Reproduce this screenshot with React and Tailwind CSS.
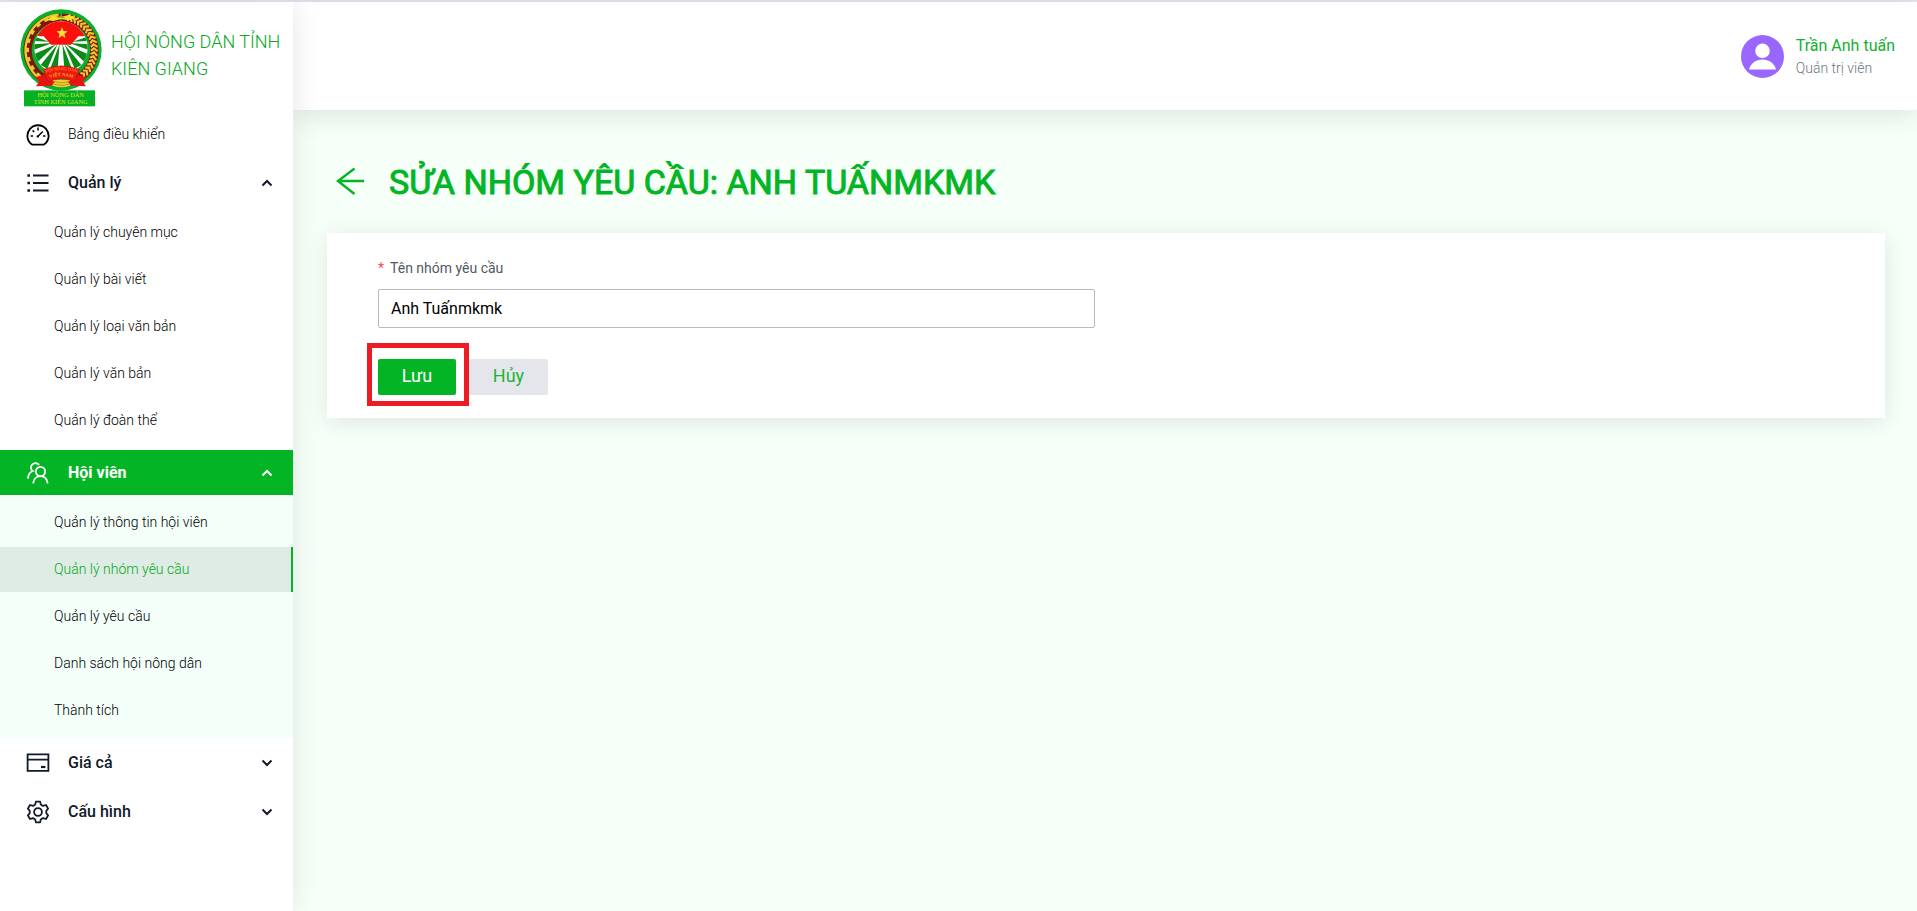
import React from "react";

const polar = (r, deg) => [
  (153 + r * Math.cos((deg * Math.PI) / 180)).toFixed(1),
  (149 + r * Math.sin((deg * Math.PI) / 180)).toFixed(1),
];

function Emblem() {
  const grains = [];
  for (let a = -80; a <= 52; a += 7) grains.push(a);
  const cogs = [];
  for (let a = 132; a <= 256; a += 16) cogs.push(a);
  return (
    <svg viewBox="27 26 252 294" className="h-[98px] w-[84px] shrink-0" role="img" aria-label="Hội Nông Dân Tỉnh Kiên Giang">
      <defs>
        <clipPath id="disk"><circle cx="153" cy="143" r="80" /></clipPath>
        <path id="ribbonTop" d="M105 218 Q153 200 203 218" />
        <path id="ribbonLow" d="M116 234 Q153 220 192 234" />
      </defs>
      <circle cx="153" cy="149" r="122" fill="#0ab02c" />
      <path d="M102 235 A98 98 0 0 1 150 52" fill="none" stroke="#7d1713" strokeWidth="25" />
      <path d="M204 235 A98 98 0 0 0 156 52" fill="none" stroke="#7d1713" strokeWidth="25" />
      <path d="M96 240 A107 107 0 0 1 146 43" fill="none" stroke="#e9cb2e" strokeWidth="7" />
      {cogs.map((a) => {
        const [x1, y1] = polar(96, a);
        const [x2, y2] = polar(108, a);
        return <line key={a} x1={x1} y1={y1} x2={x2} y2={y2} stroke="#e9cb2e" strokeWidth="13" />;
      })}
      {grains.map((a) => {
        const [x0, y0] = polar(90, a + 4);
        const [x1, y1] = polar(99, a);
        const [x2, y2] = polar(110, a + 5);
        return <polyline key={a} points={`${x0},${y0} ${x1},${y1} ${x2},${y2}`} fill="none" stroke="#efc62c" strokeWidth="6.5" />;
      })}
      <path d="M110 59 L128 46 L153 49 L178 44 L199 54 L176 60 L153 56 L130 62 Z" fill="#f3e22c" />
      <path d="M142 51 H164" stroke="#b98516" strokeWidth="3" />
      <circle cx="153" cy="143" r="80" fill="#fff" />
      <g clipPath="url(#disk)">
        <g fill="#0b8a17">
          <path d="M118 124 L70 108 L69 122 Z" />
          <path d="M128 128 L67 132 L68 150 Z" />
          <path d="M138 132 L71 162 L82 186 Z" />
          <path d="M143 131 L92 194 L112 205 Z" />
          <path d="M149 131 L121 204 L143 204 Z" />
          <path d="M157 131 L163 204 L185 204 Z" />
          <path d="M163 131 L194 205 L214 194 Z" />
          <path d="M168 132 L224 186 L235 162 Z" />
          <path d="M178 128 L238 150 L239 132 Z" />
          <path d="M188 124 L237 122 L236 108 Z" />
        </g>
        <path d="M68 107 V50 H238 V107 L205 108 L183 133 H123 L101 108 Z" fill="#fb0f0c" />
      </g>
      <path d="M156 81 l4.6 11.3 12.2 0.8 -9.4 7.8 3 11.9 -10.4 -6.5 -10.3 6.5 3 -11.9 -9.4 -7.8 12.2 -0.8 Z" fill="#ffdf3b" />
      <path d="M128 238 h52 v18 q-26 10 -52 0 Z" fill="#f2cd31" />
      <path d="M132 244 q22 7 45 0 M132 252 q22 7 45 0" fill="none" stroke="#a6741b" strokeWidth="2" />
      <path d="M76 231 L106 222 L134 246 L124 256 L78 258 L87 244 Z" fill="#e8140f" />
      <path d="M229 231 L200 222 L174 246 L184 256 L228 258 L219 244 Z" fill="#e8140f" />
      <path d="M100 207 Q153 186 208 207 L194 244 Q153 226 114 244 Z" fill="#f0190f" stroke="#b70f0b" strokeWidth="1.5" />
      <text fontFamily="Liberation Serif, serif" fontSize="13" fill="#ffae23" textAnchor="middle">
        <textPath href="#ribbonTop" startOffset="50%">HỘI NÔNG DÂN</textPath>
      </text>
      <text fontFamily="Liberation Serif, serif" fontSize="14" fontWeight="700" fill="#ffae23" textAnchor="middle">
        <textPath href="#ribbonLow" startOffset="50%">VIỆT NAM</textPath>
      </text>
      <rect x="42" y="270" width="213" height="48" fill="#06b025" />
      <g fontFamily="Liberation Serif, serif" fontSize="19" fill="#d5e829" textAnchor="middle">
        <text x="152" y="290">HỘI NÔNG DÂN</text>
        <text x="152" y="311">TỈNH KIÊN GIANG</text>
      </g>
    </svg>
  );
}

const stroke = { fill: "none", stroke: "currentColor", strokeWidth: 2 };

const GaugeIcon = () => (
  <svg viewBox="0 0 24 24" className="size-6" {...stroke} strokeWidth="1.8" aria-hidden="true">
    <path d="M6 21.6 A10.6 10.6 0 1 1 18 21.6 Z" strokeLinejoin="round" />
    <path d="M12 4.5 V7.5 M4.6 13 H7 M17 13 H19.4 M6.6 7.4 L8.2 9 M11.8 13.6 L16.8 8.4" strokeWidth="1.5" />
    <circle cx="11.8" cy="13.4" r="1.2" fill="currentColor" stroke="none" />
  </svg>
);
const ListIcon = () => (
  <svg viewBox="0 0 24 24" className="size-6" {...stroke} aria-hidden="true">
    <path d="M7 4.5 H22.5 M7 12 H22.5 M7 19.5 H22.5" />
    <path d="M1.4 4.5 H4 M1.4 12 H4 M1.4 19.5 H4" strokeWidth="2.6" />
  </svg>
);
const MembersIcon = () => (
  <svg viewBox="0 0 24 24" className="size-6" {...stroke} strokeWidth="1.8" aria-hidden="true">
    <circle cx="14.5" cy="10.5" r="4.6" />
    <path d="M7.2 22.4 C7.6 18 10.6 15.2 14.5 15.2 C18.4 15.2 21 18 21.6 22.4" />
    <path d="M13 4.2 C12 2 8.5 1.4 6.2 3.6 C4.2 5.8 4.6 8.6 6.8 10 C3.8 11 2.2 13.6 2 17.6" />
  </svg>
);
const CardIcon = () => (
  <svg viewBox="0 0 24 24" className="size-6" {...stroke} strokeWidth="1.8" aria-hidden="true">
    <path d="M1.6 3.4 H22.4 V19.8 H1.6 Z M1.6 8.6 H22.4" />
    <path d="M15 16 H19.4" strokeWidth="2.2" />
  </svg>
);
const GearIcon = () => (
  <svg viewBox="0 0 24 24" className="size-6" {...stroke} strokeWidth="1.8" strokeLinejoin="round" aria-hidden="true">
    <path d="M9.9 1.6 H14.1 L14.8 4.6 L17 5.9 L20 5 L22.1 8.6 L20.3 10.8 V13.2 L22.1 15.4 L20 19 L17 18.1 L14.8 19.4 L14.1 22.4 H9.9 L9.2 19.4 L7 18.1 L4 19 L1.9 15.4 L3.7 13.2 V10.8 L1.9 8.6 L4 5 L7 5.9 L9.2 4.6 Z" />
    <circle cx="12" cy="12" r="3.9" />
  </svg>
);
const Chevron = ({ open }) => (
  <svg viewBox="0 0 12 12" className="size-3" {...stroke} aria-hidden="true">
    <path d={open ? "M1.5 8.5 L6 4 L10.5 8.5" : "M1.5 3.5 L6 8 L10.5 3.5"} />
  </svg>
);

const base = "flex h-[45px] w-full items-center gap-[18px] pl-[26px] pr-5 text-left";

function Group({ icon, label, open, active, items = [] }) {
  return (
    <li>
      <button
        type="button"
        aria-expanded={!!open}
        className={`${base} text-base ${active ? "bg-[#03b525] font-bold text-white" : "font-medium text-[#111827]"}`}
      >
        {icon}
        <span className="flex-1">{label}</span>
        <Chevron open={open} />
      </button>
      {open && (
        <ul className={`flex flex-col gap-[2px] py-[5px] ${active ? "bg-[#f4fffa]" : ""}`}>
          {items.map((item) => {
            const current = item === "Quản lý nhóm yêu cầu";
            return (
              <li key={item}>
                <a
                  href="#"
                  aria-current={current ? "page" : undefined}
                  className={`flex h-[45px] items-center pb-[2px] pl-[54px] text-sm font-light ${
                    current ? "border-r-2 border-[#03b525] bg-[#deece5] text-[#06a822]" : "text-black"
                  }`}
                >
                  {item}
                </a>
              </li>
            );
          })}
        </ul>
      )}
    </li>
  );
}

export default function App() {
  return (
    <div className="flex min-h-screen flex-col border-t-2 border-[#e4e6f0] bg-[#f6fff8] font-['Roboto',sans-serif]">
      <div className="flex flex-1">
        <aside className="z-20 w-[293px] shrink-0 bg-white shadow-[0_0_28px_rgba(0,0,0,0.1)]">
          <div className="flex h-[110px] gap-2 pl-[19px] pt-[7px]">
            <Emblem />
            <p className="pt-[19px] text-lg leading-[27px] font-light text-[#06a822]">
              HỘI NÔNG DÂN TỈNH
              <br />
              KIÊN GIANG
            </p>
          </div>
          <nav aria-label="Menu chính">
            <ul>
              <li className="mb-[3px]">
                <a href="#" className={`${base} text-sm font-light text-black`}>
                  <GaugeIcon />
                  <span className="pb-[2px]">Bảng điều khiển</span>
                </a>
              </li>
              <Group
                icon={<ListIcon />}
                label="Quản lý"
                open
                items={["Quản lý chuyên mục", "Quản lý bài viết", "Quản lý loại văn bản", "Quản lý văn bản", "Quản lý đoàn thể"]}
              />
              <li className="h-[2px]" aria-hidden="true" />
              <Group
                icon={<MembersIcon />}
                label="Hội viên"
                open
                active
                items={["Quản lý thông tin hội viên", "Quản lý nhóm yêu cầu", "Quản lý yêu cầu", "Danh sách hội nông dân", "Thành tích"]}
              />
              <li className="h-[2px]" aria-hidden="true" />
              <Group icon={<CardIcon />} label="Giá cả" />
              <li className="h-1" aria-hidden="true" />
              <Group icon={<GearIcon />} label="Cấu hình" />
            </ul>
          </nav>
        </aside>

        <div className="min-w-0 flex-1">
          <header className="relative z-10 flex h-[108px] items-center justify-end gap-3 bg-white pr-[22px] shadow-[0_4px_28px_rgba(0,0,0,0.12)]">
            <svg viewBox="0 0 43 43" className="size-[43px]" role="img" aria-label="Ảnh đại diện">
              <circle cx="21.5" cy="21.5" r="21.5" fill="#9966ff" />
              <circle cx="21.5" cy="15.8" r="7.3" fill="#fff" />
              <path d="M8 34.4 C10 28 15 24.6 21.5 24.6 C28 24.6 33 28 35 34.4 Z" fill="#fff" />
            </svg>
            <div>
              <p className="text-base leading-6 text-[#14b032]">Trần Anh tuấn</p>
              <p className="text-sm leading-[21px] font-light text-[#6c757d]">Quản trị viên</p>
            </div>
          </header>

          <main className="pl-[34px] pr-8 pt-12">
            <div className="flex items-center gap-[25px] pl-[9px]">
              <a href="#" aria-label="Quay lại" className="text-[#03b525]">
                <svg viewBox="0 0 28 28" className="size-7" {...stroke} strokeWidth="2.4" aria-hidden="true">
                  <path d="M28 13 H2 M18.5 0.5 L2 13 L18.5 26" />
                </svg>
              </a>
              <h1 className="text-[34px] leading-[48px] font-normal text-[#03b525] [-webkit-text-stroke:1px]">
                SỬA NHÓM YÊU CẦU: ANH TUẤNMKMK
              </h1>
            </div>
            <form className="mt-[27px] bg-white px-[51px] pt-6 pb-[23px] shadow-[0_4px_24px_rgba(0,0,0,0.1)]" onSubmit={(e) => e.preventDefault()}>
              <label htmlFor="group-name" className="flex items-center gap-[6px] text-sm leading-[22px] text-[#52595f]">
                <span className="text-[#ff4d4f]">*</span>
                <span>Tên nhóm yêu cầu</span>
              </label>
              <input
                id="group-name"
                type="text"
                required
                defaultValue="Anh Tuấnmkmk"
                className="mt-[10px] block h-[39px] w-[717px] max-w-full rounded-[2px] border border-[#b9babf] bg-white px-3 text-base text-black outline-none"
              />
              <div className="mt-[31px] flex gap-[13px]">
                <div className="relative">
                  <button type="submit" className="h-9 w-[78px] rounded-[2px] bg-[#03b525] pb-[2px] text-lg text-white">
                    Lưu
                  </button>
                  <span className="pointer-events-none absolute -top-4 -right-[13px] -bottom-[11px] -left-[11px] z-10 border-[5px] border-[#ed1c24]" />
                </div>
                <button type="button" className="h-9 w-[79px] rounded-[2px] bg-[#e4e6eb] pb-[2px] text-lg text-[#1fb436]">
                  Hủy
                </button>
              </div>
            </form>
          </main>
        </div>
      </div>
    </div>
  );
}
